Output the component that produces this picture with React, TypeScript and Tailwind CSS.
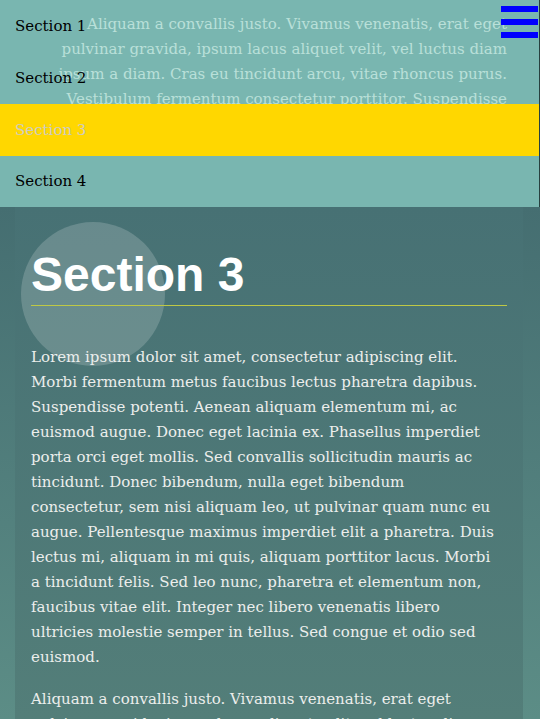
import React from 'react';

const sections = ['Section 1', 'Section 2', 'Section 3', 'Section 4'];

const ghostLines = [
  'Aliquam a convallis justo. Vivamus venenatis, erat eget',
  'pulvinar gravida, ipsum lacus aliquet velit, vel luctus diam',
  'ipsum a diam. Cras eu tincidunt arcu, vitae rhoncus purus.',
  'Vestibulum fermentum consectetur porttitor. Suspendisse',
];

const para1 = [
  'Lorem ipsum dolor sit amet, consectetur adipiscing elit.',
  'Morbi fermentum metus faucibus lectus pharetra dapibus.',
  'Suspendisse potenti. Aenean aliquam elementum mi, ac',
  'euismod augue. Donec eget lacinia ex. Phasellus imperdiet',
  'porta orci eget mollis. Sed convallis sollicitudin mauris ac',
  'tincidunt. Donec bibendum, nulla eget bibendum',
  'consectetur, sem nisi aliquam leo, ut pulvinar quam nunc eu',
  'augue. Pellentesque maximus imperdiet elit a pharetra. Duis',
  'lectus mi, aliquam in mi quis, aliquam porttitor lacus. Morbi',
  'a tincidunt felis. Sed leo nunc, pharetra et elementum non,',
  'faucibus vitae elit. Integer nec libero venenatis libero',
  'ultricies molestie semper in tellus. Sed congue et odio sed',
  'euismod.',
];

const para2 = [
  'Aliquam a convallis justo. Vivamus venenatis, erat eget',
  'pulvinar gravida, ipsum lacus aliquet velit, vel luctus diam',
  'ipsum a diam. Cras eu tincidunt arcu, vitae rhoncus purus.',
];

const serif = "font-['DejaVu_Serif','Liberation_Serif',serif]";

export default function App() {
  return (
    <div className={`relative h-[719px] w-[540px] overflow-hidden bg-[#456e71] ${serif}`}>
      {/* menu */}
      <nav className="relative h-[207px] bg-[#79b6b0] border-r border-[#27403f]">
        {/* text of the page showing through */}
        <div className="absolute left-0 top-[12px] w-[507px] text-right text-[15px] leading-[25px] text-[#b9e0d9]">
          {ghostLines.map((l) => (
            <div key={l} className="whitespace-nowrap">{l}</div>
          ))}
        </div>
        <ul className="relative flex flex-col">
          {sections.map((s, i) => (
            <li
              key={s}
              className={`flex items-center px-[15px] text-[15px] ${i === 3 ? 'h-[51px]' : 'h-[52px]'} ${
                i === 2 ? 'bg-[#ffd700] text-[#cdccc2]' : i === 3 ? 'bg-[#79b6b0] text-black' : 'text-black'
              }`}
            >
              {s}
            </li>
          ))}
        </ul>
      </nav>

      {/* hamburger */}
      <button className="absolute right-[2px] top-[6px] flex w-[37px] flex-col gap-[7px]">
        <span className="block h-[6px] w-full bg-[#0000ff]" />
        <span className="block h-[6px] w-full bg-[#0000ff]" />
        <span className="block h-[6px] w-full bg-[#0000ff]" />
      </button>

      <main className="h-[512px] bg-gradient-to-b from-[#456e71] to-[#5c8d86] pl-[15px] pr-[17px]">
        <section className="relative h-full bg-gradient-to-b from-[#477174] to-[#537e79] px-4 pt-[40px]">
          <div className="absolute left-[6px] top-[15px] h-[144px] w-[144px] rounded-full bg-white/[0.18]" />
          <h1 className="relative font-['Liberation_Sans',Arial,sans-serif] text-[48px] font-bold leading-[55px] text-white">
            Section 3
          </h1>
          <hr className="relative mt-[3px] border-0 border-t border-[#bfc845]" />
          <p className="relative mt-[39px] text-[15px] leading-[25px] text-[#eceeec]">
            {para1.map((l) => (
              <span key={l} className="block whitespace-nowrap">{l}</span>
            ))}
          </p>
          <p className="relative mt-[17px] text-[15px] leading-[25px] text-[#eceeec]">
            {para2.map((l) => (
              <span key={l} className="block whitespace-nowrap">{l}</span>
            ))}
          </p>
        </section>
      </main>
    </div>
  );
}
